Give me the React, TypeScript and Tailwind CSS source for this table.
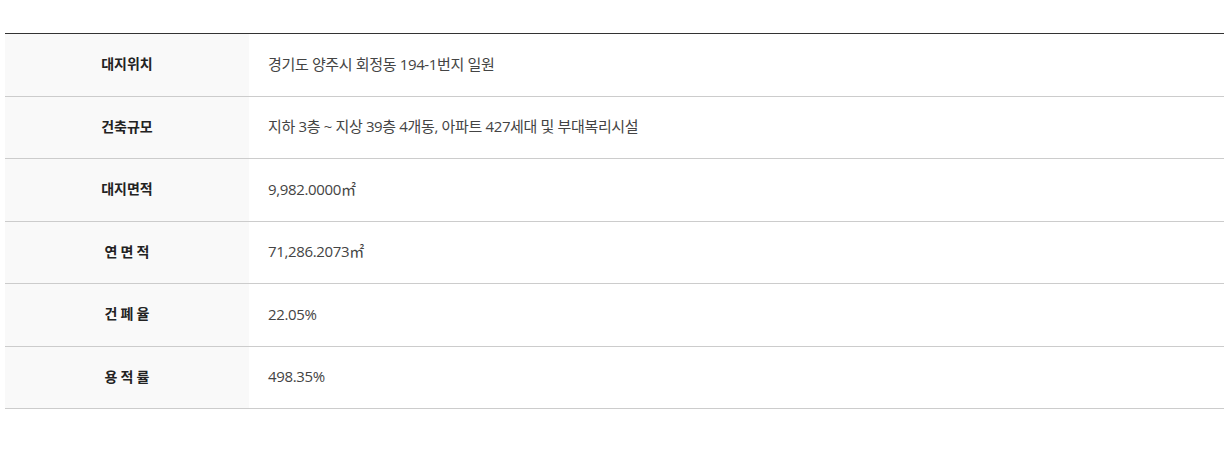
const rows: { label: string; value: string }[] = [
  { label: "대지위치", value: "경기도 양주시 회정동 194-1번지 일원" },
  { label: "건축규모", value: "지하 3층 ~ 지상 39층 4개동, 아파트 427세대 및 부대복리시설" },
  { label: "대지면적", value: "9,982.0000㎡" },
  { label: "연 면 적", value: "71,286.2073㎡" },
  { label: "건 폐 율", value: "22.05%" },
  { label: "용 적 률", value: "498.35%" },
];

export default function App() {
  return (
    <div
      className="w-full bg-white pt-[33px] px-[5px]"
      style={{ fontFamily: '"Noto Sans CJK KR", "Noto Sans", sans-serif' }}
    >
      <div className="border-t border-[#333]">
        {rows.map((r) => (
          <div key={r.label} className="flex h-[62.5px] border-b border-[#cccccc]">
            <div className="w-[244px] shrink-0 bg-[#f9f9f9] flex items-center justify-center text-[14px] font-bold text-[#222] whitespace-pre pb-[2px]">
              {r.label}
            </div>
            <div className="flex-1 flex items-center pl-[19px] pb-[2px] text-[15px] text-[#444] tracking-[-0.35px] font-['Open_Sans','Noto_Sans_CJK_KR',sans-serif]">
              {r.value}
            </div>
          </div>
        ))}
      </div>
    </div>
  );
}
